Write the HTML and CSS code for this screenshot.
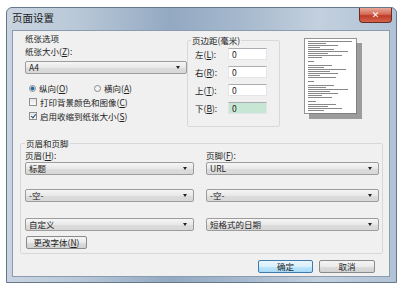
FILE: index.html
```html
<!DOCTYPE html>
<html lang="zh-CN">
<head>
    <meta charset="UTF-8">
    <title>页面设置</title>
    <link rel="stylesheet" href="styles.css">
</head>
<body>
    <div class="window">
        <div class="titlebar">
            <span class="title">页面设置</span>
            <span class="close">✕</span>
        </div>
        <div class="client">
            <div class="top">
                <div class="paper">
                    <div class="line">纸张选项</div>
                    <div class="line">纸张大小(<u>Z</u>):</div>
                    <div class="combo">A4</div>
                    <div class="radios">
                        <div class="opt"><span class="radio on"></span>纵向(<u>O</u>)</div>
                        <div class="opt"><span class="radio"></span>横向(<u>A</u>)</div>
                    </div>
                    <div class="opt check-row"><span class="check"></span>打印背景颜色和图像(<u>C</u>)</div>
                    <div class="opt check-row"><span class="check on"></span>启用收缩到纸张大小(<u>S</u>)</div>
                </div>

                <fieldset class="margins">
                    <legend>页边距(毫米)</legend>
                    <div class="field"><span class="field-label">左(<u>L</u>):</span><span class="edit">0</span></div>
                    <div class="field"><span class="field-label">右(<u>R</u>):</span><span class="edit">0</span></div>
                    <div class="field"><span class="field-label">上(<u>T</u>):</span><span class="edit">0</span></div>
                    <div class="field"><span class="field-label">下(<u>B</u>):</span><span class="edit focus">0</span></div>
                </fieldset>

                <div class="preview">
                    <svg width="59" height="82" viewBox="0 0 59 82">
                        <rect x="5" y="5" width="53" height="76" fill="#9c9c9c"/>
                        <rect x="0.5" y="0.5" width="52" height="75" fill="#fff" stroke="#333" stroke-dasharray="1 1"/>
                        <path stroke="#6a6a6a" stroke-width="0.8" d="M4 3.5h44 M4 5.5h18 M4 7.5h30 M4 9.5h12 M4 11.5h26 M4 13.5h40 M4 15.5h20 M4 17.5h34 M4 19.5h14
                            M4 23.5h6 M4 27.5h24 M4 29.5h16 M4 31.5h38 M4 33.5h22 M4 35.5h30 M4 37.5h12 M4 39.5h28
                            M4 43.5h6 M4 47.5h26 M4 49.5h18 M4 51.5h40 M4 53.5h22 M4 55.5h30 M4 57.5h14 M4 59.5h24
                            M4 63.5h8 M4 66.5h28 M4 68.5h20 M4 70.5h34 M4 72.5h16"/>
                    </svg>
                </div>
            </div>

            <fieldset class="hf">
                <legend>页眉和页脚</legend>
                <div class="hf-grid">
                    <div class="line">页眉(<u>H</u>):</div>
                    <div class="line">页脚(<u>F</u>):</div>
                    <div class="combo">标题</div>
                    <div class="combo">URL</div>
                    <div class="combo row2">-空-</div>
                    <div class="combo row2">-空-</div>
                    <div class="combo row3">自定义</div>
                    <div class="combo row3">短格式的日期</div>
                </div>
                <div class="btn font-btn">更改字体(<u>N</u>)</div>
            </fieldset>

            <div class="actions">
                <div class="btn default">确定</div>
                <div class="btn">取消</div>
            </div>
        </div>
    </div>
</body>
</html>
```

FILE: styles.css
```css
/* Page */
body {
    margin: 0;
    background: #fff;
    font-family: "Noto Sans CJK SC", sans-serif;
    font-size: 8.5px;
    color: #222;
}

u {
    text-decoration: underline;
    text-underline-offset: 1px;
}

/* Aero window frame */
.window {
    box-sizing: border-box;
    width: 391px;
    height: 276px;
    margin: 7px 0 0 6px;
    padding: 0 6px 5px 5px;
    border: 1px solid #66778b;
    border-radius: 6px 6px 0 0;
    background: linear-gradient(90deg, #c9d4e0 0%, #b9c8d8 18%, #93a9c2 42%, #a5b8cd 60%, #c3d0de 80%, #b1c3d6 100%);
}

.titlebar {
    height: 22px;
    display: flex;
    align-items: flex-start;
    justify-content: space-between;
}

.title {
    margin: 3px 0 0 0;
    font-size: 10.5px;
    line-height: 13px;
    color: #1a1a1a;
}

.close {
    width: 33px;
    height: 15px;
    margin-right: -2px;
    box-sizing: border-box;
    border: 1px solid #6e2a22;
    border-top: none;
    border-radius: 0 0 4px 4px;
    background: linear-gradient(#e9a898 0%, #d46b58 45%, #bf3b26 55%, #d2644d 100%);
    color: #fff;
    font-size: 9px;
    font-weight: bold;
    line-height: 14px;
    text-align: center;
    font-family: "DejaVu Sans", sans-serif;
}

.client {
    box-sizing: border-box;
    height: 247px;
    border: 1px solid #8b9bb0;
    background: #f0f0f0;
}

/* Top area */
.top {
    display: flex;
    align-items: flex-start;
    height: 97px;
}

.paper {
    width: 162px;
    margin: 1px 0 0 12px;
}

.line {
    height: 13px;
    line-height: 13px;
}

.combo {
    position: relative;
    box-sizing: border-box;
    height: 13px;
    padding-left: 3px;
    line-height: 11px;
    border: 1px solid #9c9c9c;
    border-radius: 2px;
    background: linear-gradient(#f6f6f6 0%, #e8e8e8 50%, #dcdcdc 51%, #d8d8d8 100%);
}

.combo::after {
    content: "";
    position: absolute;
    right: 6px;
    top: 4px;
    border-left: 2.5px solid transparent;
    border-right: 2.5px solid transparent;
    border-top: 3px solid #222;
}

.paper .combo {
    margin-top: 3px;
}

.radios {
    display: grid;
    grid-template-columns: 69px auto;
    margin-top: 8px;
}

.opt {
    display: flex;
    align-items: center;
    height: 12px;
    padding-left: 4px;
    line-height: 12px;
}

.radios .opt:last-child {
    padding-left: 0;
}

.check-row {
    margin-top: 2px;
}

.radio {
    width: 7px;
    height: 7px;
    margin-right: 3px;
    box-sizing: border-box;
    border: 1px solid #8a8a8a;
    border-radius: 50%;
    background: #f4f4f4;
}

.radio.on {
    background: radial-gradient(circle, #1f6fa8 0 1.8px, #e8eef4 2.2px);
}

.check {
    position: relative;
    width: 8px;
    height: 8px;
    margin-right: 3px;
    box-sizing: border-box;
    border: 1px solid #8e8f8f;
    background: linear-gradient(#e6e6e6, #fafafa);
}

.check.on::after {
    content: "";
    position: absolute;
    left: 1.5px;
    top: 0;
    width: 2px;
    height: 4px;
    border-right: 1.2px solid #2c4a7a;
    border-bottom: 1.2px solid #2c4a7a;
    transform: rotate(40deg);
}

/* Margin group */
fieldset {
    margin: 0;
    min-width: 0;
    border: 1px solid #d8d8d8;
    border-radius: 2px;
}

legend {
    padding: 0 1px;
    height: 12px;
    line-height: 12px;
}

.margins {
    box-sizing: border-box;
    width: 93px;
    margin-top: 3px;
    padding: 0 0 12px 3px;
}

.field {
    display: flex;
    align-items: center;
    height: 12px;
    margin-top: 6px;
    padding-left: 4px;
}

.field:first-of-type {
    margin-top: 2px;
}

.field-label {
    width: 33px;
}

.edit {
    box-sizing: border-box;
    width: 39px;
    height: 12px;
    padding-left: 3px;
    line-height: 10px;
    background: #fff;
    border: 1px solid #e2e6ea;
    border-top-color: #abadb3;
}

.edit.focus {
    background: #c8e6d4;
}

.preview {
    margin: 7px 0 0 24px;
}

.preview svg {
    display: block;
}

/* Header / footer group */
.hf {
    box-sizing: border-box;
    width: 363px;
    margin: 9px 0 0 7px;
    padding: 0 4px 4px 4px;
}

.hf-grid {
    display: grid;
    grid-template-columns: 169px 173px;
    column-gap: 12px;
}

.row2 {
    margin-top: 14px;
}

.row3 {
    margin-top: 16px;
}

.btn {
    box-sizing: border-box;
    height: 13px;
    line-height: 11px;
    text-align: center;
    border: 1px solid #8a8a8a;
    border-radius: 2px;
    background: linear-gradient(#f4f4f4 0%, #ebebeb 50%, #dddddd 51%, #d2d2d2 100%);
}

.font-btn {
    width: 61px;
    margin: 5px 0 0 1px;
}

.actions {
    display: flex;
    justify-content: flex-end;
    gap: 6px;
    margin-top: 6px;
    padding-right: 14px;
}

.actions .btn {
    width: 56px;
}

.btn.default {
    width: 55px;
    border-color: #3d7bad;
    background: linear-gradient(#eaf6fd 0%, #d9f0fc 50%, #bee6fd 51%, #a7d9f5 100%);
}
```
